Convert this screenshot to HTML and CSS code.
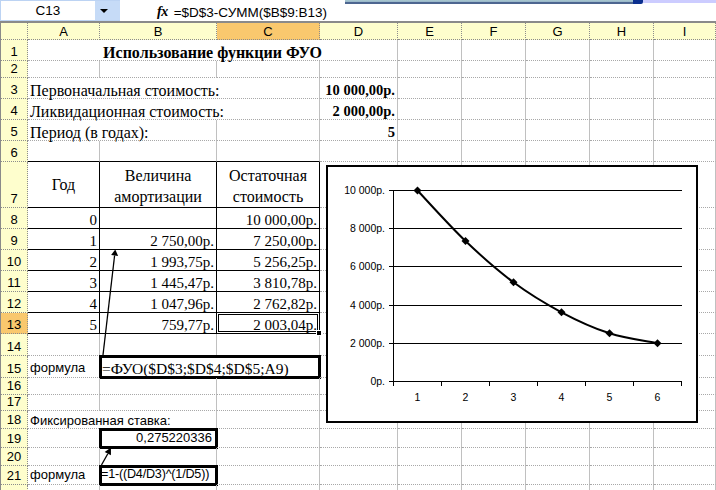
FILE: index.html
```html
<!DOCTYPE html>
<html lang="ru">
<head>
<meta charset="utf-8">
<title>Использование функции ФУО</title>
<link rel="stylesheet" href="styles.css">
</head>
<body>
<div class="app">
  <div class="fbar">
    <div class="namebox">C13</div>
    <div class="dd"><span class="tri"></span></div>
    <div class="fx">fx</div>
    <div class="ftext">=$D$3-СУММ($B$9:B13)</div>
  </div>
  <div class="strip"></div>
  <div class="strip-knob"></div>
  <div class="strip-lav"></div>

  <div class="sheet">
    <!-- header -->
    <div class="h corner"></div><div class="h">A</div><div class="h">B</div><div class="h hsel">C</div><div class="h">D</div><div class="h">E</div><div class="h">F</div><div class="h">G</div><div class="h">H</div><div class="h">I</div>
    <!-- 1 -->
    <div class="h rh">1</div><div class="c s4 m b cy">Использование функции ФУО</div><div class="c"></div><div class="c"></div><div class="c"></div><div class="c"></div><div class="c"></div>
    <!-- 2 -->
    <div class="h rh">2</div><div class="c"></div><div class="c"></div><div class="c"></div><div class="c"></div><div class="c"></div><div class="c"></div><div class="c"></div><div class="c"></div><div class="c"></div>
    <!-- 3 -->
    <div class="h rh">3</div><div class="c s3 cy">Первоначальная стоимость:</div><div class="c r b nb">10 000,00р.</div><div class="c"></div><div class="c"></div><div class="c"></div><div class="c"></div><div class="c"></div>
    <!-- 4 -->
    <div class="h rh">4</div><div class="c s3 cy">Ликвидационная стоимость:</div><div class="c r b nb">2 000,00р.</div><div class="c"></div><div class="c"></div><div class="c"></div><div class="c"></div><div class="c"></div>
    <!-- 5 -->
    <div class="h rh">5</div><div class="c s2 cy">Период (в годах):</div><div class="c"></div><div class="c r b nb">5</div><div class="c"></div><div class="c"></div><div class="c"></div><div class="c"></div><div class="c"></div>
    <!-- 6 -->
    <div class="h rh">6</div><div class="c tb"></div><div class="c tb"></div><div class="c tb"></div><div class="c"></div><div class="c"></div><div class="c"></div><div class="c"></div><div class="c"></div><div class="c"></div>
    <!-- 7 -->
    <div class="h rh">7</div><div class="c t m mid cy">Год</div><div class="c t m wrap cy">Величина<br>амортизации</div><div class="c t m wrap cy">Остаточная<br>стоимость</div><div class="c"></div><div class="c"></div><div class="c"></div><div class="c"></div><div class="c"></div><div class="c"></div>
    <!-- 8 -->
    <div class="h rh">8</div><div class="c t r">0</div><div class="c t r"></div><div class="c t r">10 000,00р.</div><div class="c"></div><div class="c"></div><div class="c"></div><div class="c"></div><div class="c"></div><div class="c"></div>
    <!-- 9 -->
    <div class="h rh">9</div><div class="c t r">1</div><div class="c t r">2 750,00р.</div><div class="c t r">7 250,00р.</div><div class="c"></div><div class="c"></div><div class="c"></div><div class="c"></div><div class="c"></div><div class="c"></div>
    <!-- 10 -->
    <div class="h rh">10</div><div class="c t r">2</div><div class="c t r">1 993,75р.</div><div class="c t r">5 256,25р.</div><div class="c"></div><div class="c"></div><div class="c"></div><div class="c"></div><div class="c"></div><div class="c"></div>
    <!-- 11 -->
    <div class="h rh">11</div><div class="c t r">3</div><div class="c t r">1 445,47р.</div><div class="c t r">3 810,78р.</div><div class="c"></div><div class="c"></div><div class="c"></div><div class="c"></div><div class="c"></div><div class="c"></div>
    <!-- 12 -->
    <div class="h rh">12</div><div class="c t r">4</div><div class="c t r">1 047,96р.</div><div class="c t r">2 762,82р.</div><div class="c"></div><div class="c"></div><div class="c"></div><div class="c"></div><div class="c"></div><div class="c"></div>
    <!-- 13 -->
    <div class="h rh hsel">13</div><div class="c t r">5</div><div class="c t r">759,77р.</div><div class="c t r sel">2 003,04р.<span class="handle"></span></div><div class="c"></div><div class="c"></div><div class="c"></div><div class="c"></div><div class="c"></div><div class="c"></div>
    <!-- 14 -->
    <div class="h rh">14</div><div class="c"></div><div class="c"></div><div class="c"></div><div class="c"></div><div class="c"></div><div class="c"></div><div class="c"></div><div class="c"></div><div class="c"></div>
    <!-- 15 -->
    <div class="h rh">15</div><div class="c a">формула</div><div class="c s2 box f15">=ФУО($D$3;$D$4;$D$5;A9)</div><div class="c"></div><div class="c"></div><div class="c"></div><div class="c"></div><div class="c"></div><div class="c"></div>
    <!-- 16 -->
    <div class="h rh">16</div><div class="c"></div><div class="c"></div><div class="c"></div><div class="c"></div><div class="c"></div><div class="c"></div><div class="c"></div><div class="c"></div><div class="c"></div>
    <!-- 17 -->
    <div class="h rh">17</div><div class="c"></div><div class="c"></div><div class="c"></div><div class="c"></div><div class="c"></div><div class="c"></div><div class="c"></div><div class="c"></div><div class="c"></div>
    <!-- 18 -->
    <div class="h rh">18</div><div class="c s2 a a0">Фиксированная ставка:</div><div class="c"></div><div class="c"></div><div class="c"></div><div class="c"></div><div class="c"></div><div class="c"></div><div class="c"></div>
    <!-- 19 -->
    <div class="h rh">19</div><div class="c"></div><div class="c a r box pr">0,275220336</div><div class="c"></div><div class="c"></div><div class="c"></div><div class="c"></div><div class="c"></div><div class="c"></div><div class="c"></div>
    <!-- 20 -->
    <div class="h rh">20</div><div class="c"></div><div class="c"></div><div class="c"></div><div class="c"></div><div class="c"></div><div class="c"></div><div class="c"></div><div class="c"></div><div class="c"></div>
    <!-- 21 -->
    <div class="h rh">21</div><div class="c a">формула</div><div class="c a box tight">=1-((D4/D3)^(1/D5))</div><div class="c"></div><div class="c"></div><div class="c"></div><div class="c"></div><div class="c"></div><div class="c"></div><div class="c"></div>
    <!-- 22 -->
    <div class="h rh">22</div><div class="c"></div><div class="c"></div><div class="c"></div><div class="c"></div><div class="c"></div><div class="c"></div><div class="c"></div><div class="c"></div><div class="c"></div>
  </div>

  <div class="chart">
    <svg class="chart-svg" width="372" height="258" viewBox="0 0 372 258">
      <g stroke="#000" stroke-width="1" fill="none">
        <line x1="67.5" y1="25.5" x2="356" y2="25.5"/>
        <line x1="67.5" y1="63.5" x2="356" y2="63.5"/>
        <line x1="67.5" y1="101.5" x2="356" y2="101.5"/>
        <line x1="67.5" y1="140.5" x2="356" y2="140.5"/>
        <line x1="67.5" y1="178.5" x2="356" y2="178.5"/>
        <line x1="67.5" y1="216.5" x2="356" y2="216.5"/>
        <line x1="67.5" y1="25" x2="67.5" y2="217"/>
        <line x1="63" y1="25.5" x2="67.5" y2="25.5"/>
        <line x1="63" y1="63.5" x2="67.5" y2="63.5"/>
        <line x1="63" y1="101.5" x2="67.5" y2="101.5"/>
        <line x1="63" y1="140.5" x2="67.5" y2="140.5"/>
        <line x1="63" y1="178.5" x2="67.5" y2="178.5"/>
        <line x1="63" y1="216.5" x2="67.5" y2="216.5"/>
        <line x1="67.5" y1="216.5" x2="67.5" y2="221"/>
        <line x1="115.5" y1="216.5" x2="115.5" y2="221"/>
        <line x1="163.5" y1="216.5" x2="163.5" y2="221"/>
        <line x1="211.5" y1="216.5" x2="211.5" y2="221"/>
        <line x1="259.5" y1="216.5" x2="259.5" y2="221"/>
        <line x1="307.5" y1="216.5" x2="307.5" y2="221"/>
        <line x1="355.5" y1="216.5" x2="355.5" y2="221"/>
      </g>
      <path d="M91.5 25.5 C99.5 33.9 123.5 60.7 139.5 76 C155.5 91.3 171.5 105.4 187.5 117.3 C203.5 129.2 219.5 138.8 235.5 147.3 C251.5 155.8 267.5 163.1 283.5 168.3 C299.5 173.5 323.5 176.6 331.5 178.3" fill="none" stroke="#000" stroke-width="2"/>
      <g fill="#000">
        <path d="M87.5 25.5 L91.5 21.5 L95.5 25.5 L91.5 29.5 Z"/>
        <path d="M135.5 76 L139.5 72 L143.5 76 L139.5 80 Z"/>
        <path d="M183.5 117.3 L187.5 113.3 L191.5 117.3 L187.5 121.3 Z"/>
        <path d="M231.5 147.3 L235.5 143.3 L239.5 147.3 L235.5 151.3 Z"/>
        <path d="M279.5 168.3 L283.5 164.3 L287.5 168.3 L283.5 172.3 Z"/>
        <path d="M327.5 178.3 L331.5 174.3 L335.5 178.3 L331.5 182.3 Z"/>
      </g>
      <g class="ylab" text-anchor="end">
        <text x="59" y="29">10 000р.</text>
        <text x="59" y="67">8 000р.</text>
        <text x="59" y="105">6 000р.</text>
        <text x="59" y="144">4 000р.</text>
        <text x="59" y="182">2 000р.</text>
        <text x="59" y="220">0р.</text>
      </g>
      <g class="xlab" text-anchor="middle">
        <text x="91.5" y="236">1</text>
        <text x="139.5" y="236">2</text>
        <text x="187.5" y="236">3</text>
        <text x="235.5" y="236">4</text>
        <text x="283.5" y="236">5</text>
        <text x="331.5" y="236">6</text>
      </g>
    </svg>
  </div>

  <svg class="arrows" width="716" height="490" viewBox="0 0 716 490">
    <line x1="103" y1="355" x2="114.6" y2="255.5" stroke="#000" stroke-width="1.3"/>
    <polygon points="115.3,249.5 118.1,255.9 111.1,255.1" fill="#000"/>
    <line x1="101.5" y1="465" x2="107.8" y2="453.7" stroke="#000" stroke-width="1.3"/>
    <polygon points="111,447.5 110.9,455.3 104.7,452.1" fill="#000"/>
  </svg>
</div>
</body>
</html>
```

FILE: styles.css
```css
html, body {
  margin: 0;
  padding: 0;
  background: #fff;
}

.app {
  position: relative;
  width: 716px;
  height: 490px;
  overflow: hidden;
  background: #fff;
  font-family: "Liberation Sans", Arial, sans-serif;
}

/* formula bar */
.fbar {
  display: flex;
  align-items: stretch;
  height: 21px;
  background: #fff;
  font-size: 13.5px;
}

.namebox {
  width: 95px;
  box-sizing: border-box;
  display: flex;
  align-items: flex-end;
  justify-content: center;
  padding: 0 0 2px 0;
  line-height: 15px;
  border: 1px solid #bcd3f3;
  border-right: none;
  background: #fff;
  color: #000;
}

.dd {
  width: 25px;
  box-sizing: border-box;
  background: #c6dbf7;
  border-top: 1px solid #bcd3f3;
  border-bottom: 1px solid #bcd3f3;
  display: flex;
  align-items: center;
  padding-left: 5px;
}

.tri {
  width: 0;
  height: 0;
  border-left: 4px solid transparent;
  border-right: 4px solid transparent;
  border-top: 4px solid #000;
}

.fx {
  margin-left: 37px;
  font-family: "Liberation Serif", "Times New Roman", serif;
  font-style: italic;
  font-weight: bold;
  font-size: 14px;
  letter-spacing: -0.5px;
  line-height: 15px;
  display: flex;
  align-items: flex-end;
  padding-bottom: 2px;
}

.ftext {
  margin-left: 6px;
  display: flex;
  align-items: flex-end;
  padding-bottom: 1px;
  line-height: 15px;
}

.strip {
  position: absolute;
  left: 345px;
  top: 0;
  width: 288px;
  height: 4px;
  background: linear-gradient(to bottom, #a9c9cf 0, #93b0c7 60%, #4d6690 60%, #4d6690 100%);
}

.strip-knob {
  position: absolute;
  left: 633px;
  top: 0;
  width: 10px;
  height: 4px;
  background: #0b2f8f;
  border-radius: 0 0 2px 0;
}

.strip-lav {
  position: absolute;
  left: 643px;
  top: 0;
  width: 73px;
  height: 3px;
  background: #ccccff;
}

/* sheet */
.sheet {
  display: grid;
  grid-template-columns: 27px 72px 117px 103px 78px 64px 64px 64px 64px 62px;
  grid-template-rows: 17px 21px 17px 21px 21px 21px 21px 46px 21px 21px 21px 21px 21px 21px 22px 22px 17px 16px 18px 19px 18px 19px 20px;
  border-top: 2px solid #8a8a8a;
  border-left: 1px solid #8a8a8a;
}

.h {
  background: #fefecd;
  border-right: 1px dotted #8c8c8c;
  border-bottom: 1px dotted #8c8c8c;
  display: flex;
  align-items: center;
  justify-content: center;
  font-family: "Liberation Sans", Arial, sans-serif;
  font-size: 13px;
  line-height: 15px;
  color: #000;
}

.rh {
  align-items: flex-end;
  padding-bottom: 1px;
}

.hsel {
  background: #f9c86e;
}

.c {
  border-right: 1px solid #c0c0c0;
  border-bottom: 1px dotted #a8a8a8;
  display: flex;
  align-items: flex-end;
  padding: 0 2px;
  white-space: nowrap;
  font-family: "Liberation Serif", "Times New Roman", serif;
  font-size: 15px;
  line-height: 15px;
  color: #000;
  min-width: 0;
}

.cy { font-size: 16px; }
.nb { font-size: 14.5px; }

.s2 { grid-column: span 2; }
.s3 { grid-column: span 3; }
.s4 { grid-column: span 4; }

.r { justify-content: flex-end; }
.m { justify-content: center; text-align: center; }
.b { font-weight: bold; }

.mid { align-items: center; line-height: 17px; }
.wrap { line-height: 21px; white-space: nowrap; }

.tb { border-bottom: 1px solid #000; }

.t {
  border-right: 1px solid #000;
  border-bottom: 1px solid #000;
}

.sel {
  position: relative;
  box-shadow: inset 0 0 0 1px #fff, inset 0 0 0 2px #000;
}

.handle {
  position: absolute;
  right: -3px;
  bottom: -3px;
  width: 4px;
  height: 4px;
  background: #000;
  border: 1px solid #fff;
  z-index: 2;
}

.a {
  font-family: "Liberation Sans", Arial, sans-serif;
  font-size: 13px;
  line-height: 15px;
  padding-bottom: 2px;
}

.a0 { padding-bottom: 0; }

.pr { padding-right: 4px; }

.tight {
  font-size: 12.6px;
  letter-spacing: -0.2px;
  padding-left: 1px;
}

.f15 {
  font-size: 15.5px;
  padding-bottom: 1px;
}

.box {
  outline: 3px solid #000;
  outline-offset: -2px;
}

/* chart */
.chart {
  position: absolute;
  left: 326px;
  top: 165px;
  width: 372px;
  height: 258px;
  box-sizing: border-box;
  border: 2px solid #000;
  background: #fff;
}

.chart-svg {
  position: absolute;
  left: -2px;
  top: -2px;
  display: block;
}

.ylab, .xlab {
  font-family: "Liberation Sans", Arial, sans-serif;
  font-size: 10.5px;
  fill: #000;
}

.arrows {
  position: absolute;
  left: 0;
  top: 0;
  pointer-events: none;
}
```
